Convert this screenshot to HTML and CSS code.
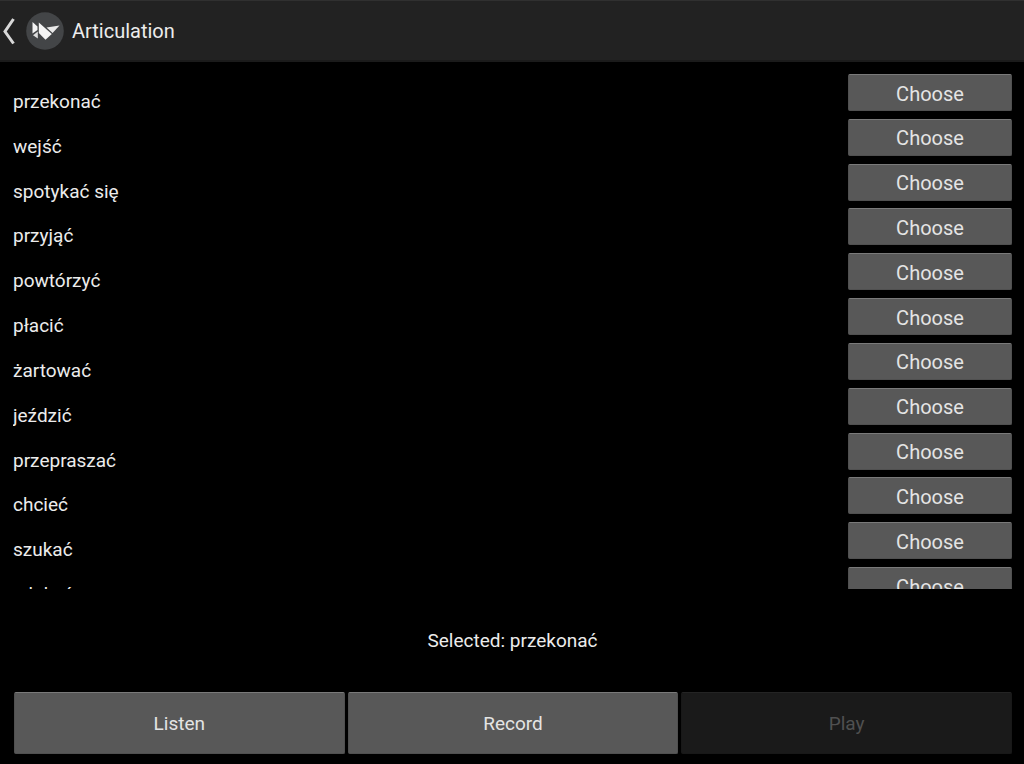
FILE: index.html
```
<!DOCTYPE html>
<html lang="en">
<head>
<meta charset="utf-8">
<title>Articulation</title>
<link rel="stylesheet" href="styles.css">
</head>
<body>
<header class="bar">
  <button class="back" aria-label="Back">
    <svg class="chevron" viewBox="0 0 16 28" aria-hidden="true"><path d="M13.500 2 5 14.500 13.500 26.500" fill="none" stroke="#d8d8d8" stroke-width="3"/></svg>
    <svg class="logo" viewBox="0 0 38 38" aria-hidden="true">
      <circle cx="19" cy="19" r="18.800" fill="#434547"/>
      <path d="M6.500 10 11.500 14.500V18L6.500 21.500Z" fill="#f4f4f4"/>
      <path d="M7 23.200 11.800 19.500V26.500Z" fill="#dedede"/>
      <path d="M12.800 10.500 25.800 22 19.500 27.800 12.800 21Z" fill="#f4f4f4"/>
      <path d="M20.500 15.500 33.500 13.500 26.600 21Z" fill="#e9e9e9"/>
    </svg>
  </button>
  <h1 class="title">Articulation</h1>
</header>
<main class="main">
  <div class="scroller">
    <ul class="words">
      <li class="row"><span class="word">przekonać</span><button class="btn choose">Choose</button></li>
      <li class="row"><span class="word">wejść</span><button class="btn choose">Choose</button></li>
      <li class="row"><span class="word">spotykać się</span><button class="btn choose">Choose</button></li>
      <li class="row"><span class="word">przyjąć</span><button class="btn choose">Choose</button></li>
      <li class="row"><span class="word">powtórzyć</span><button class="btn choose">Choose</button></li>
      <li class="row"><span class="word">płacić</span><button class="btn choose">Choose</button></li>
      <li class="row"><span class="word">żartować</span><button class="btn choose">Choose</button></li>
      <li class="row"><span class="word">jeździć</span><button class="btn choose">Choose</button></li>
      <li class="row"><span class="word">przepraszać</span><button class="btn choose">Choose</button></li>
      <li class="row"><span class="word">chcieć</span><button class="btn choose">Choose</button></li>
      <li class="row"><span class="word">szukać</span><button class="btn choose">Choose</button></li>
      <li class="row"><span class="word">zdobyć</span><button class="btn choose">Choose</button></li>
    </ul>
  </div>
  <p class="selected">Selected: przekonać</p>
  <div class="actions">
    <button class="btn">Listen</button>
    <button class="btn">Record</button>
    <button class="btn" disabled>Play</button>
  </div>
</main>
</body>
</html>
```
FILE: styles.css
```
* { box-sizing: border-box; }
body {
  margin: 0;
  height: 100vh;
  display: flex;
  flex-direction: column;
  background: #000;
  color: #ececec;
  font: 19px/24px Roboto, sans-serif;
}
.bar {
  flex: none;
  display: flex;
  align-items: center;
  gap: 8px;
  height: 62px;
  background: #222;
  border-top: 1px solid #303030;
  border-bottom: 2px solid #1b1b1b;
}
.back {
  display: flex;
  align-items: center;
  gap: 10px;
  padding: 0;
  border: 0;
  background: none;
}
.chevron { width: 16px; height: 28px; }
.logo { width: 38px; height: 38px; }
.title {
  margin: 0;
  font-size: 20px;
  font-weight: 400;
}
.main {
  flex: 1;
  min-height: 0;
  display: flex;
  flex-direction: column;
  padding: 12px 12px 10px 13px;
}
.scroller {
  flex: 1;
  min-height: 0;
  overflow: hidden;
}
.words {
  display: grid;
  grid-template-rows: repeat(12, 1fr);
  height: 538px;
  margin: 0;
  padding: 0;
  list-style: none;
}
.row {
  display: flex;
  justify-content: space-between;
  align-items: flex-start;
}
.word { padding-top: 16px; }
.btn {
  padding: 2px 0 0;
  border: 1px solid #505050;
  border-top-color: #7a7a7a;
  border-radius: 2px;
  background: #585858;
  color: #e4e4e4;
  font: 20px/24px Roboto, sans-serif;
}
.choose {
  width: 164px;
  height: 37px;
}
.selected {
  margin: 0;
  padding: 40px 0 39px;
  text-align: center;
}
.actions {
  display: grid;
  grid-template-columns: repeat(3, 1fr);
  gap: 3px;
  height: 62px;
  padding-left: 1px;
}
.actions .btn { font-size: 19px; }
.btn:disabled {
  background: #1a1a1a;
  border-color: #181818;
  border-top-color: #242424;
  color: #505050;
}
```
